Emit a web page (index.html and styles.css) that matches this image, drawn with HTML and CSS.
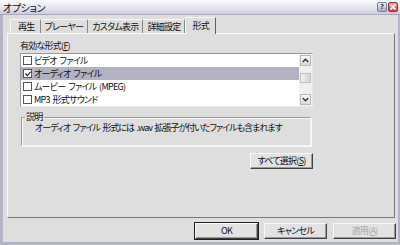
FILE: index.html
```html
<!DOCTYPE html>
<html lang="ja">
<head>
    <meta charset="UTF-8">
    <title>オプション</title>
    <link rel="stylesheet" href="styles.css">
</head>
<body>
    <div class="window">
        <div class="titlebar">
            <span class="title">オプション</span>
            <span class="title-buttons">
                <span class="tb-help">?</span>
                <span class="tb-close">
                    <svg width="6" height="6" viewBox="0 0 6 6"><path d="M0.5 0.5 L5.5 5.5 M5.5 0.5 L0.5 5.5" stroke="#fff" stroke-width="1.6"/></svg>
                </span>
            </span>
        </div>

        <div class="tabs">
            <div class="tab">再生</div>
            <div class="tab">プレーヤー</div>
            <div class="tab">カスタム表示</div>
            <div class="tab">詳細設定</div>
            <div class="tab active">形式</div>
        </div>

        <div class="panel">
            <div class="label">有効な形式(<u>F</u>)</div>
            <div class="listbox">
                <div class="items">
                    <div class="item"><span class="check"></span>ビデオ ファイル</div>
                    <div class="item selected"><span class="check checked">
                        <svg width="6" height="6" viewBox="0 0 6 6"><path d="M0.5 2.5 L2.3 4.6 L5.6 0.8" stroke="#222" stroke-width="1.2" fill="none"/></svg>
                    </span>オーディオ ファイル</div>
                    <div class="item"><span class="check"></span>ムービー ファイル (MPEG)</div>
                    <div class="item"><span class="check"></span>MP3 形式サウンド</div>
                </div>
                <div class="scrollbar">
                    <div class="sb-btn">
                        <svg width="7" height="5" viewBox="0 0 7 5"><path d="M0.8 4 L3.5 1.2 L6.2 4" stroke="#333" stroke-width="1.4" fill="none"/></svg>
                    </div>
                    <div class="sb-track"><div class="sb-thumb"></div></div>
                    <div class="sb-btn">
                        <svg width="7" height="5" viewBox="0 0 7 5"><path d="M0.8 1 L3.5 3.8 L6.2 1" stroke="#333" stroke-width="1.4" fill="none"/></svg>
                    </div>
                </div>
            </div>

            <fieldset class="group">
                <legend>説明</legend>
                <div class="desc">オーディオ ファイル 形式には .wav 拡張子が付いたファイルも含まれます</div>
            </fieldset>

            <div class="row-right">
                <div class="button">すべて選択(<u>S</u>)</div>
            </div>
        </div>

        <div class="footer">
            <div class="button default">OK</div>
            <div class="button">キャンセル</div>
            <div class="button disabled">適用(<u>A</u>)</div>
        </div>
    </div>
</body>
</html>
```

FILE: styles.css
```css
* {
    box-sizing: border-box;
}
body, html {
    margin: 0;
    padding: 0;
    background-color: #dedede;
}
.window {
    width: 400px;
    height: 245px;
    background-color: #dedede;
    border-left: 3px solid #b4b4c8;
    border-right: 2px solid #b4b4c8;
    border-bottom: 3px solid #b4b4c8;
    font-family: "Noto Sans CJK JP", sans-serif;
    font-feature-settings: "palt";
    font-size: 9px;
    letter-spacing: -0.75px;
    word-spacing: 1.5px;
    color: #111;
    display: flex;
    flex-direction: column;
}
.titlebar {
    height: 15px;
    margin-left: -3px;
    margin-right: -2px;
    display: flex;
    align-items: center;
    justify-content: space-between;
    padding: 0 2px 0 3px;
    background: linear-gradient(#fbfbfd, #e2e2ee 60%, #cbcbdc);
    border-bottom: 1px solid #a8a8bc;
}
.title {
    font-size: 10px;
    line-height: 13px;
    letter-spacing: -0.4px;
}
.title-buttons {
    display: flex;
    gap: 1px;
}
.tb-help, .tb-close {
    width: 10px;
    height: 10px;
    border-radius: 2px;
    display: flex;
    align-items: center;
    justify-content: center;
}
.tb-help {
    background: linear-gradient(#f4f4fa, #a8a8c0);
    border: 1px solid #7878a0;
    font-family: "DejaVu Sans", sans-serif;
    font-size: 7px;
    font-weight: bold;
    letter-spacing: 0;
    color: #444;
}
.tb-close {
    background: linear-gradient(#f0a0a0, #d83a30);
    border: 1px solid #a03030;
}
.tabs {
    display: flex;
    align-items: flex-end;
    height: 18px;
    padding-left: 7px;
}
.tab {
    height: 14px;
    line-height: 13px;
    padding: 0 4px;
    border-right: 1px solid #8a8a8a;
    border-top: 1px solid #f6f6f6;
    white-space: nowrap;
}
.tab:first-child {
    border-left: 1px solid #f6f6f6;
    padding-left: 7px;
    padding-right: 5px;
}
.tab.active {
    height: 17px;
    line-height: 15px;
    padding: 0 6px;
    border-left: 1px solid #f6f6f6;
    border-right: 1px solid #606060;
    margin-bottom: -1px;
    background-color: #dedede;
    position: relative;
    z-index: 1;
}
.panel {
    margin: 0 3px 0 4px;
    height: 185px;
    border-top: 1px solid #f8f8f8;
    border-left: 1px solid #f8f8f8;
    border-right: 1px solid #7a7a7a;
    border-bottom: 1px solid #7a7a7a;
    padding: 6px 80px 0 12px;
}
.label {
    line-height: 12px;
    margin-bottom: 1px;
}
.listbox {
    display: flex;
    height: 54px;
    width: 293px;
    border: 1px solid #9a9a9a;
    border-right-color: #e8e8e8;
    border-bottom-color: #e8e8e8;
    background-color: #fff;
}
.items {
    flex: 1;
}
.item {
    height: 13px;
    line-height: 13px;
    display: flex;
    align-items: center;
    padding-left: 2px;
    white-space: nowrap;
}
.item.selected {
    background-color: #b2b2c2;
}
.check {
    width: 9px;
    height: 9px;
    border: 1px solid #555;
    background-color: #fff;
    margin-right: 2px;
    display: flex;
    align-items: center;
    justify-content: center;
}
.scrollbar {
    width: 13px;
    display: flex;
    flex-direction: column;
    background-color: #f0f0f0;
    padding: 1px;
}
.sb-btn {
    height: 11px;
    border: 1px solid #b8b8b8;
    background: linear-gradient(#fafafa, #d8d8d8);
    display: flex;
    align-items: center;
    justify-content: center;
}
.sb-track {
    flex: 1;
    padding-top: 7px;
}
.sb-thumb {
    height: 10px;
    border: 1px solid #c0c0c0;
    background: linear-gradient(90deg, #f2f2f2, #d4d4d4);
}
.group {
    margin: 5px 0 0 1px;
    min-width: 0;
    width: 290px;
    height: 34px;
    border: 1px solid #9a9a9a;
    border-right-color: #f4f4f4;
    border-bottom-color: #f4f4f4;
    box-shadow: 1px 1px 0 #f8f8f8 inset, 1px 1px 0 #f8f8f8;
    padding: 0 0 0 13px;
}
.group legend {
    padding: 0 1px;
    margin-left: -10px;
    line-height: 10px;
}
.desc {
    line-height: 11px;
    letter-spacing: -1px;
    white-space: nowrap;
}
.row-right {
    display: flex;
    justify-content: flex-end;
    width: 293px;
    margin-top: 7px;
}
.button {
    width: 63px;
    height: 16px;
    line-height: 14px;
    text-align: center;
    background-color: #e2e2e2;
    border: 1px solid #f8f8f8;
    border-right-color: #404040;
    border-bottom-color: #404040;
    box-shadow: inset -1px -1px 0 #9a9a9a;
    white-space: nowrap;
}
.button.default {
    outline: 1px solid #202020;
}
.button.disabled {
    color: #a8a8a8;
}
.footer {
    display: flex;
    justify-content: flex-end;
    gap: 6px;
    padding: 5px 2px 0 0;
}
```
